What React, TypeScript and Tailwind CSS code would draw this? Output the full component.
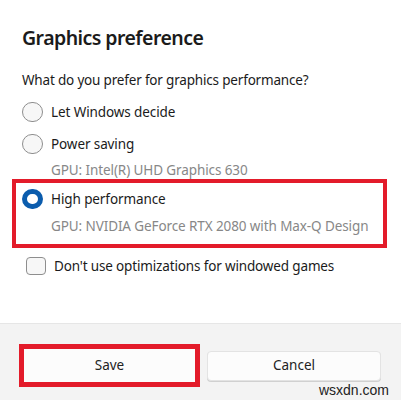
import React from "react";

const font = { fontFamily: '"Noto Sans", "Open Sans", sans-serif' };

function Radio({ checked }: { checked?: boolean }) {
  return checked ? (
    <div className="w-[21px] h-[20px] rounded-full border-[5px] border-[#0b5cad] bg-white shrink-0" />
  ) : (
    <div className="w-[21px] h-[20px] rounded-full border border-[#8e8e8e] bg-[#f7f7f7] shrink-0" />
  );
}

export default function App() {
  return (
    <div className="w-[401px] h-[400px] bg-white relative overflow-hidden text-[#1b1b1b]" style={font}>
      <div className="h-[323px] bg-white pl-[22px] pt-[24px] flex flex-col">
        <div className="h-[28px] flex items-center text-[19.5px] font-semibold tracking-[-0.55px]">Graphics preference</div>
        <div className="mt-[18px] h-[20px] flex items-center text-[13.5px] tracking-[-0.18px]">
          What do you prefer for graphics performance?
        </div>
        <div className="mt-[10px] h-[24px] flex items-center gap-[8px] text-[13.5px] tracking-[-0.1px]">
          <Radio />
          <span>Let Windows decide</span>
        </div>
        <div className="mt-[8px] h-[24px] flex items-center gap-[8px] text-[13.5px] tracking-[-0.1px]">
          <Radio />
          <span>Power saving</span>
        </div>
        <div className="mt-[5px] h-[18px] flex items-center pl-[29px] text-[13.5px] tracking-[-0.1px] text-[#878787]">
          GPU: Intel(R) UHD Graphics 630
        </div>
        <div className="-ml-[10px] w-[375px] border-[4px] border-[#e31b2a] pl-[6px] pt-[4px] pb-[8px] flex flex-col">
          <div className="h-[24px] flex items-center gap-[8px] text-[13.5px] tracking-[-0.1px]">
            <Radio checked />
            <span>High performance</span>
          </div>
          <div className="mt-[5px] h-[20px] flex items-center pl-[29px] text-[13.5px] tracking-[-0.1px] text-[#878787]">
            GPU: NVIDIA GeForce RTX 2080 with Max-Q Design
          </div>
        </div>
        <div className="mt-[6px] h-[24px] flex items-center gap-[8px] pl-[4px] text-[13.5px] tracking-[-0.15px]">
          <div className="w-[20px] h-[18px] rounded-[4px] border border-[#8e8e8e] bg-[#f7f7f7] shrink-0" />
          <span>Don't use optimizations for windowed games</span>
        </div>
      </div>
      <div className="h-[77px] bg-[#f3f3f3] border-t border-[#e6e6e6] flex items-center pt-[7px] pl-[19px] pr-[20px] gap-[7px]">
        <div className="w-[181px] h-[43px] border-[5px] border-[#e31b2a] bg-[#fcfcfc] flex items-center justify-center text-[13.5px] text-[#222]">
          Save
        </div>
        <div className="w-[174px] h-[30px] rounded-[4px] bg-[#fcfcfc] border border-[#e3e3e3] shadow-[0_1px_0_#d0d0d0] flex items-center justify-center text-[13.5px] text-[#222]">
          Cancel
        </div>
      </div>
      <div className="absolute right-[12px] bottom-[2px] text-[14px] text-[#222] leading-[16px]" style={{ fontFamily: '"Liberation Sans", Arial, sans-serif' }}>
        wsxdn.com
      </div>
    </div>
  );
}
